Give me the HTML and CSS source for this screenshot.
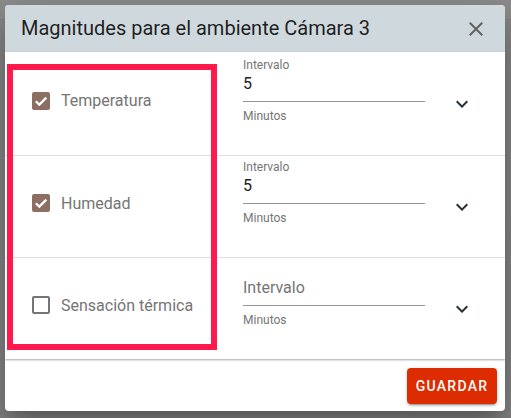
FILE: index.html
```html
<!DOCTYPE html>
<html lang="es">
<head>
<meta charset="utf-8">
<link rel="stylesheet" href="styles.css">
</head>
<body>
<div class="backdrop">
  <div class="dialog">
    <div class="header">
      <span class="title">Magnitudes para el ambiente Cámara 3</span>
      <svg class="close" viewBox="0 0 24 24" width="24" height="24"><path d="M19 6.41L17.59 5 12 10.59 6.41 5 5 6.41 10.59 12 5 17.59 6.41 19 12 13.41 17.59 19 19 17.59 13.41 12z" fill="currentColor"/></svg>
    </div>
    <div class="panel">
      <div class="row first">
        <div class="check-cell">
          <span class="box checked"><svg viewBox="0 0 18 18" width="18" height="18"><polyline points="3.8,9.2 7.3,12.6 14.3,5.6" fill="none" stroke="#fff" stroke-width="2.2"/></svg></span>
          <span class="check-label">Temperatura</span>
        </div>
        <div class="field">
          <div class="f-label">Intervalo</div>
          <div class="f-input">5</div>
          <div class="f-hint">Minutos</div>
        </div>
        <svg class="chev" viewBox="0 0 24 24" width="24" height="24"><path d="M16.59 8.59L12 13.17 7.41 8.59 6 10l6 6 6-6z" fill="currentColor"/></svg>
      </div>
      <div class="row">
        <div class="check-cell">
          <span class="box checked"><svg viewBox="0 0 18 18" width="18" height="18"><polyline points="3.8,9.2 7.3,12.6 14.3,5.6" fill="none" stroke="#fff" stroke-width="2.2"/></svg></span>
          <span class="check-label">Humedad</span>
        </div>
        <div class="field">
          <div class="f-label">Intervalo</div>
          <div class="f-input">5</div>
          <div class="f-hint">Minutos</div>
        </div>
        <svg class="chev" viewBox="0 0 24 24" width="24" height="24"><path d="M16.59 8.59L12 13.17 7.41 8.59 6 10l6 6 6-6z" fill="currentColor"/></svg>
      </div>
      <div class="row last">
        <div class="check-cell">
          <span class="box"></span>
          <span class="check-label">Sensación térmica</span>
        </div>
        <div class="field">
          <div class="f-label hidden">Intervalo</div>
          <div class="f-input placeholder">Intervalo</div>
          <div class="f-hint">Minutos</div>
        </div>
        <svg class="chev" viewBox="0 0 24 24" width="24" height="24"><path d="M16.59 8.59L12 13.17 7.41 8.59 6 10l6 6 6-6z" fill="currentColor"/></svg>
      </div>
    </div>
    <div class="footer">
      <button class="save">GUARDAR</button>
    </div>
    <div class="highlight"></div>
  </div>
</div>
</body>
</html>
```
FILE: styles.css
```css
html, body {
  margin: 0;
  padding: 0;
}
body {
  width: 511px;
  height: 418px;
  overflow: hidden;
  background: #878787;
  font-family: Roboto, "Noto Sans", sans-serif;
}
.backdrop {
  padding: 5px 6px 0 5px;
  background: linear-gradient(#8d8d8d 0, #8d8d8d 19px, #7f7f7f 19px, #878787 20px, #858585 100%);
  height: 418px;
  box-sizing: border-box;
}
.dialog {
  position: relative;
  width: 500px;
  height: 406px;
  background: #fff;
  border-radius: 4px;
  overflow: hidden;
  display: flex;
  flex-direction: column;
  box-shadow: 0 11px 15px -7px rgba(0,0,0,.2), 0 24px 38px 3px rgba(0,0,0,.14), 0 9px 46px 8px rgba(0,0,0,.12);
}
.header {
  height: 47px;
  flex: none;
  background: #cfd8dc;
  display: flex;
  align-items: center;
  justify-content: space-between;
  padding: 0 17px 0 16px;
}
.title {
  font-size: 20px;
  color: rgba(0,0,0,.87);
  padding-bottom: 2px;
}
.close {
  color: #616161;
  display: block;
}
.panel {
  flex: none;
  background: #fff;
  box-shadow: 0 1px 2px rgba(0,0,0,.35);
  position: relative;
  z-index: 1;
}
.row {
  height: 101px;
  display: flex;
  align-items: center;
  border-bottom: 1px solid #e0e0e0;
}
.row.first {
  height: 103px;
}
.row.last {
  border-bottom: none;
}
.check-cell {
  width: 238px;
  box-sizing: border-box;
  padding: 0 0 7px 27px;
  display: flex;
  align-items: center;
  flex: none;
}
.first .check-cell {
  padding-bottom: 6px;
}
.box {
  width: 18px;
  height: 18px;
  box-sizing: border-box;
  border: 2px solid #757575;
  border-radius: 2px;
  flex: none;
  position: relative;
}
.box.checked {
  background: #8d6e63;
  border-color: #8d6e63;
}
.box svg {
  position: absolute;
  left: -2px;
  top: -2px;
}
.check-label {
  margin-left: 11px;
  font-size: 16px;
  color: #757575;
}
.field {
  width: 182px;
  flex: none;
  align-self: flex-start;
  padding-top: 4px;
}
.first .field {
  padding-top: 5.5px;
}
.f-label {
  font-size: 12px;
  line-height: 14px;
  color: #757575;
}
.f-label.hidden {
  visibility: hidden;
}
.f-input {
  margin-top: 2px;
  font-size: 16px;
  line-height: 20px;
  color: #212121;
  padding-bottom: 7px;
  border-bottom: 1px solid #949494;
}
.f-input.placeholder {
  color: #757575;
}
.f-hint {
  margin-top: 7px;
  font-size: 12px;
  line-height: 14px;
  color: #757575;
}
.chev {
  margin-left: 25px;
  color: #263238;
  display: block;
  flex: none;
}
.footer {
  flex: 1;
  display: flex;
  justify-content: flex-end;
  align-items: flex-start;
  padding: 9px 8px 0 0;
}
.save {
  height: 36px;
  width: 90px;
  border: none;
  border-radius: 4px;
  background: #dd2c00;
  color: #fff;
  font-family: Roboto, sans-serif;
  font-weight: 500;
  font-size: 14px;
  letter-spacing: 1.25px;
  padding: 0;
  box-shadow: 0 3px 1px -2px rgba(0,0,0,.2), 0 2px 2px 0 rgba(0,0,0,.14), 0 1px 5px 0 rgba(0,0,0,.12);
}
.highlight {
  position: absolute;
  left: 2px;
  top: 59px;
  width: 210px;
  height: 286px;
  box-sizing: border-box;
  border: 6px solid #ff1a4b;
  z-index: 2;
  pointer-events: none;
}
```
